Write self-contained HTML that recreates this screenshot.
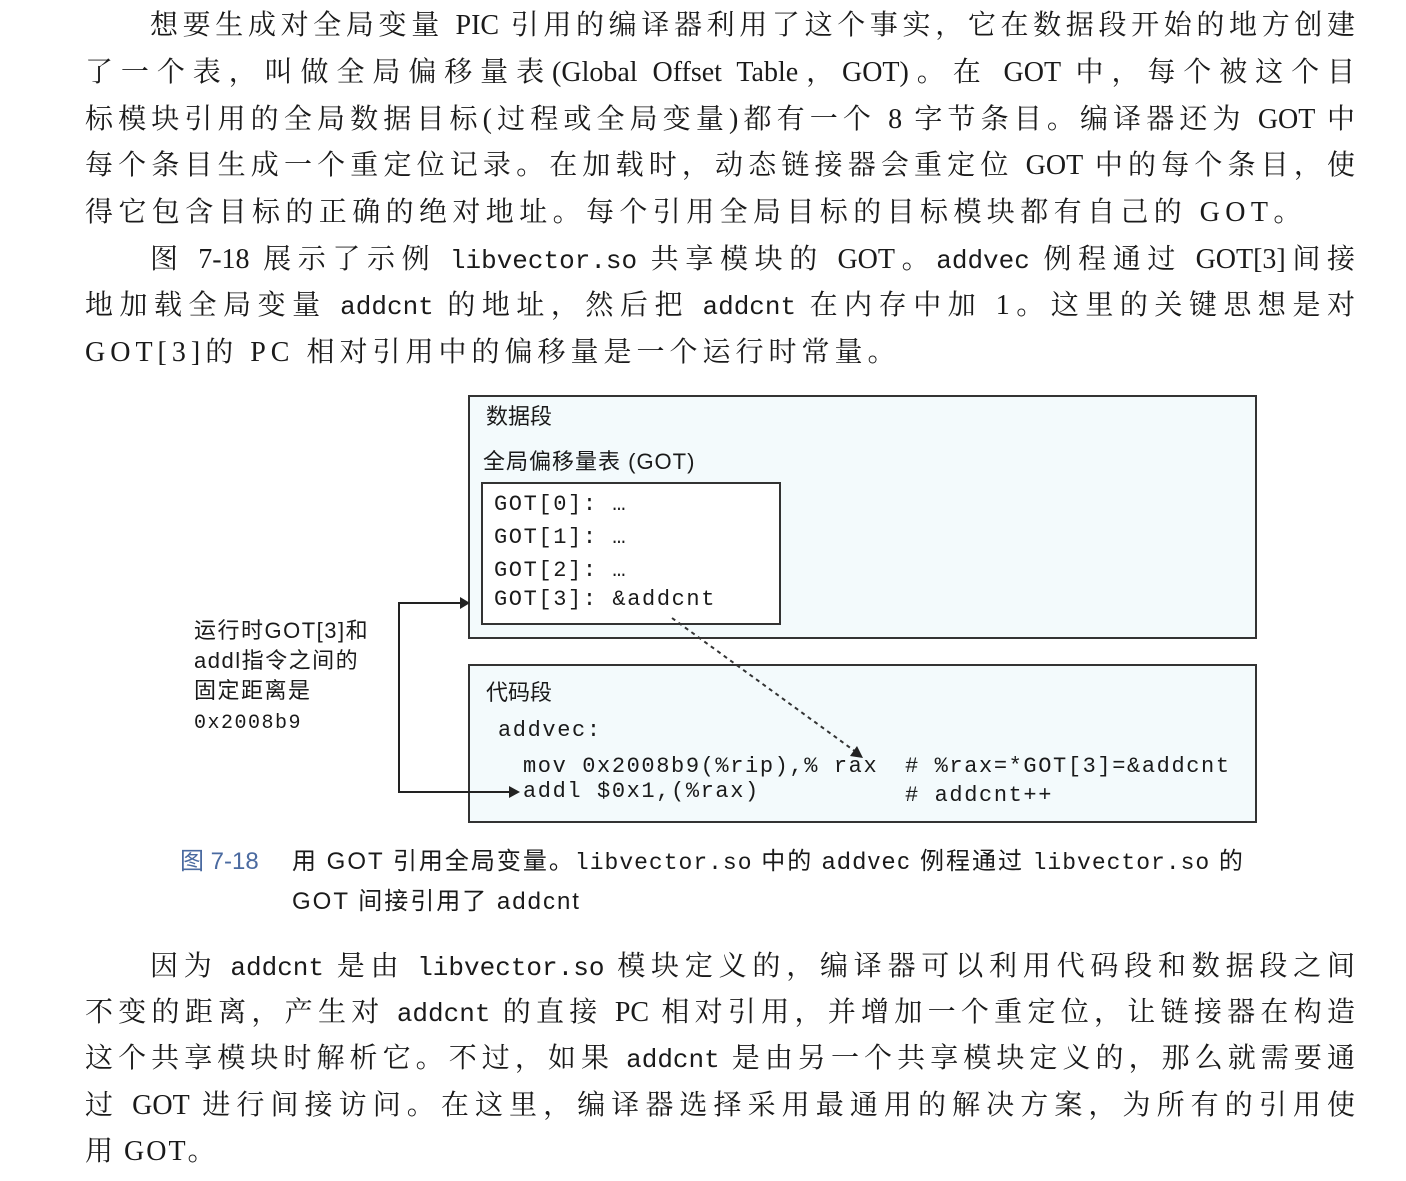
<!DOCTYPE html>
<html><head><meta charset="utf-8"><style>
body{margin:0;width:1406px;height:1181px;background:#fff;position:relative;overflow:hidden;color:#1a1a1a}
.l{position:absolute;left:85px;width:1270px;height:46px;line-height:46px;font-size:28px;font-family:"Liberation Serif","Noto Serif CJK SC",serif;text-align:justify;text-align-last:justify;white-space:nowrap}
.l.e{text-align-last:left}
.m{font-family:"Liberation Mono","Noto Sans CJK SC",monospace;font-size:26px}
.box{position:absolute;border:2px solid #333;background:#f3fafc}
.t{position:absolute;font-family:"Liberation Sans","Noto Sans CJK SC",sans-serif;font-size:22px;white-space:nowrap;line-height:28px}
.c{position:absolute;font-family:"Liberation Mono","Noto Sans CJK SC",monospace;font-size:22px;letter-spacing:1.6px;white-space:nowrap;line-height:28px}
.cap{position:absolute;font-family:"Liberation Sans","Noto Sans CJK SC",sans-serif;font-size:24px;letter-spacing:2px;white-space:nowrap;line-height:32px}
.cap .m{font-size:23px;letter-spacing:1px}
</style></head><body>
<div class="l" style="top:3px;left:150px;width:1205px">想要生成对全局变量 PIC 引用的编译器利用了这个事实，它在数据段开始的地方创建</div>
<div class="l" style="top:50px">了一个表，叫做全局偏移量表(Global Offset Table，GOT)。在 GOT 中，每个被这个目</div>
<div class="l" style="top:97px">标模块引用的全局数据目标(过程或全局变量)都有一个 8 字节条目。编译器还为 GOT 中</div>
<div class="l" style="top:143px">每个条目生成一个重定位记录。在加载时，动态链接器会重定位 GOT 中的每个条目，使</div>
<div class="l e" style="top:190px;letter-spacing:5.4px">得它包含目标的正确的绝对地址。每个引用全局目标的目标模块都有自己的 GOT。</div>
<div class="l" style="top:237px;left:150px;width:1205px">图 7-18 展示了示例 <span class="m">libvector.so</span> 共享模块的 GOT。<span class="m">addvec</span> 例程通过 GOT[3]间接</div>
<div class="l" style="top:283px">地加载全局变量 <span class="m">addcnt</span> 的地址，然后把 <span class="m">addcnt</span> 在内存中加 1。这里的关键思想是对</div>
<div class="l e" style="top:330px;letter-spacing:5px">GOT[3]的 PC 相对引用中的偏移量是一个运行时常量。</div>

<div class="box" style="left:468px;top:395px;width:785px;height:240px"></div>
<div class="t" style="left:486px;top:403px">数据段</div>
<div class="t" style="left:483px;top:448px;letter-spacing:1px">全局偏移量表 (GOT)</div>
<div class="box" style="left:481px;top:482px;width:296px;height:139px;background:#fff"></div>
<div class="c" style="left:494px;top:491px">GOT[0]: …</div>
<div class="c" style="left:494px;top:524px">GOT[1]: …</div>
<div class="c" style="left:494px;top:557px">GOT[2]: …</div>
<div class="c" style="left:494px;top:586px">GOT[3]: &amp;addcnt</div>

<div class="box" style="left:468px;top:664px;width:785px;height:155px"></div>
<div class="t" style="left:486px;top:679px">代码段</div>
<div class="c" style="left:498px;top:717px">addvec:</div>
<div class="c" style="left:523px;top:753px">mov 0x2008b9(%rip),% rax</div>
<div class="c" style="left:523px;top:778px">addl $0x1,(%rax)</div>
<div class="c" style="left:905px;top:753px"># %rax=*GOT[3]=&amp;addcnt</div>
<div class="c" style="left:905px;top:782px"># addcnt++</div>

<div class="t" style="left:194px;top:616px;line-height:30px;letter-spacing:1.5px">运行时GOT[3]和<br>addl指令之间的<br>固定距离是<br><span style="font-family:'Liberation Mono',monospace;font-size:20px;letter-spacing:1.5px">0x2008b9</span></div>

<svg style="position:absolute;left:0;top:0" width="1406" height="1181">
<polyline points="468,603 399,603 399,792 515,792" fill="none" stroke="#222" stroke-width="2"/>
<polygon points="470,603 460,597 460,609" fill="#222"/>
<polygon points="520,792 509,786 509,798" fill="#222"/>
<line x1="672" y1="618" x2="856" y2="752" stroke="#333" stroke-width="2" stroke-dasharray="4,4"/>
<polygon points="863,758 850,756 857,746" fill="#222"/>
</svg>

<div class="cap" style="left:180px;top:846px;color:#4a6aa0;letter-spacing:0">图 7-18</div>
<div class="cap" style="left:292px;top:846px">用 GOT 引用全局变量。<span class="m">libvector.so</span> 中的 addvec 例程通过 <span class="m">libvector.so</span> 的</div>
<div class="cap" style="left:292px;top:886px">GOT 间接引用了 addcnt</div>

<div class="l" style="top:944px;left:150px;width:1205px">因为 <span class="m">addcnt</span> 是由 <span class="m">libvector.so</span> 模块定义的，编译器可以利用代码段和数据段之间</div>
<div class="l" style="top:990px">不变的距离，产生对 <span class="m">addcnt</span> 的直接 PC 相对引用，并增加一个重定位，让链接器在构造</div>
<div class="l" style="top:1036px">这个共享模块时解析它。不过，如果 <span class="m">addcnt</span> 是由另一个共享模块定义的，那么就需要通</div>
<div class="l" style="top:1083px">过 GOT 进行间接访问。在这里，编译器选择采用最通用的解决方案，为所有的引用使</div>
<div class="l e" style="top:1129px;letter-spacing:2px">用 GOT。</div>
</body></html>
